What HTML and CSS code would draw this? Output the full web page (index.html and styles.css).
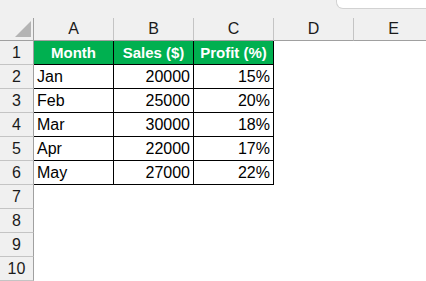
FILE: index.html
```html
<!DOCTYPE html>
<html>
<head>
<meta charset="utf-8">
<link rel="stylesheet" href="styles.css">
</head>
<body>
<div class="sheet">
  <div class="topbar"><div class="searchbox"></div></div>
  <div class="grid">
    <div class="corner"><svg width="33" height="22" viewBox="0 0 33 22"><polygon points="31,3 31,19 15,19" fill="#b4b4b4"/></svg></div>
    <div class="colhead">A</div>
    <div class="colhead">B</div>
    <div class="colhead">C</div>
    <div class="colhead">D</div>
    <div class="colhead">E</div>

    <div class="rowhead">1</div>
    <div class="cell th">Month</div>
    <div class="cell th">Sales ($)</div>
    <div class="cell th">Profit (%)</div>
    <div class="empty"></div><div class="empty"></div>

    <div class="rowhead">2</div>
    <div class="cell">Jan</div><div class="cell num">20000</div><div class="cell num">15%</div>
    <div class="empty"></div><div class="empty"></div>

    <div class="rowhead">3</div>
    <div class="cell">Feb</div><div class="cell num">25000</div><div class="cell num">20%</div>
    <div class="empty"></div><div class="empty"></div>

    <div class="rowhead">4</div>
    <div class="cell">Mar</div><div class="cell num">30000</div><div class="cell num">18%</div>
    <div class="empty"></div><div class="empty"></div>

    <div class="rowhead">5</div>
    <div class="cell">Apr</div><div class="cell num">22000</div><div class="cell num">17%</div>
    <div class="empty"></div><div class="empty"></div>

    <div class="rowhead">6</div>
    <div class="cell">May</div><div class="cell num">27000</div><div class="cell num">22%</div>
    <div class="empty"></div><div class="empty"></div>

    <div class="rowhead">7</div><div class="blank"></div>
    <div class="rowhead">8</div><div class="blank"></div>
    <div class="rowhead">9</div><div class="blank"></div>
    <div class="rowhead">10</div><div class="blank"></div>
  </div>
</div>
</body>
</html>
```
FILE: styles.css
```css
html, body {
  margin: 0;
  padding: 0;
  background: #ffffff;
  overflow: hidden;
}
.sheet {
  width: 426px;
  height: 281px;
  overflow: hidden;
  font-family: "Liberation Sans", Arial, sans-serif;
  font-size: 16px;
  color: #000;
}
.topbar {
  height: 18px;
  background: #f0f0f0;
  display: flex;
  justify-content: flex-end;
  align-items: flex-start;
}
.searchbox {
  width: 100px;
  margin-right: -10px;
  height: 9px;
  box-sizing: border-box;
  background: #ffffff;
  border: 1px solid #d2d2d2;
  border-top: none;
  border-bottom-left-radius: 7px;
}
.grid {
  display: grid;
  grid-template-columns: 34px 80px 80px 80px 80px 80px;
  grid-template-rows: 23px repeat(10, 24px);
  width: 434px;
}
.grid > div {
  box-sizing: border-box;
}
.corner {
  background: #f0f0f0;
  border-right: 1px solid #a0a0a0;
  border-bottom: 1px solid #a0a0a0;
  display: flex;
}
.colhead {
  background: #f0f0f0;
  border-right: 1px solid #c4c4c4;
  border-bottom: 1px solid #a0a0a0;
  text-align: center;
  line-height: 22px;
  color: #1a1a1a;
}
.rowhead {
  background: #f0f0f0;
  border-right: 1px solid #a0a0a0;
  border-bottom: 1px solid #c4c4c4;
  text-align: center;
  line-height: 23px;
  color: #1a1a1a;
}
.cell {
  border-right: 1px solid #000;
  border-bottom: 1px solid #000;
  line-height: 23px;
  padding: 0 3px;
  white-space: nowrap;
  overflow: hidden;
}
.cell.num {
  text-align: right;
}
.cell.th {
  background: #00b050;
  color: #ffffff;
  font-weight: bold;
  font-size: 15px;
  text-align: center;
}
.empty {
  background: #fff;
}
.blank {
  grid-column: 2 / span 5;
  background: #fff;
}
```
